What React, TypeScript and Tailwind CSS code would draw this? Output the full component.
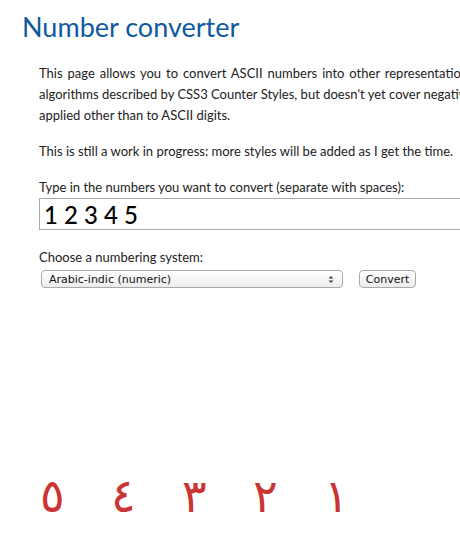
import React from "react";

export default function App() {
  const digits = ["٥", "٤", "٣", "٢", "١"];
  return (
    <div className="w-[460px] h-[552px] overflow-hidden bg-white relative" style={{ fontFamily: "Lato, 'Open Sans', sans-serif" }}>
      <div className="w-[700px]">
        <h1 className="pl-[22px] pt-[12px] text-[27px] leading-[30px] text-[#0f5a9e]">Number converter</h1>
        <div className="pl-[39px] pt-[21px] text-[13px] leading-[21px] text-[#222] whitespace-nowrap">
          <p>
            <span className="[word-spacing:1.6px]">This page allows you to convert ASCII numbers into other representations. It uses the</span>
            <br />
            <span>algorithms described by CSS3 Counter Styles, but doesn't yet cover negative numbers or</span>
            <br />
            applied other than to ASCII digits.
          </p>
          <p className="mt-[15px]">This is still a work in progress: more styles will be added as I get the time.</p>
          <p className="mt-[15px]">Type in the numbers you want to convert (separate with spaces):</p>
          <div className="h-[32px] w-[500px] border border-[#aaa] flex items-center pl-[4px] text-[24px] font-medium text-black">
            1 2 3 4 5
          </div>
          <p className="mt-[17px]">Choose a numbering system:</p>
          <div className="mt-[2px] flex items-center" style={{ fontFamily: "'DejaVu Sans', sans-serif" }}>
            <div className="ml-[2px] h-[18px] w-[302px] border border-[#a9a9a9] rounded-[4px] bg-gradient-to-b from-white to-[#ececec] flex items-center justify-between pl-[7px] pr-[8px] text-[11px] text-[#111]">
              <span>Arabic-indic (numeric)</span>
              <svg width="6" height="9" viewBox="0 0 6 9">
                <path d="M0.5 3.5 L3 1 L5.5 3.5 Z" fill="#444" />
                <path d="M0.5 5.5 L3 8 L5.5 5.5 Z" fill="#444" />
              </svg>
            </div>
            <div className="ml-[16px] h-[18px] w-[57px] border border-[#a9a9a9] rounded-[4px] bg-gradient-to-b from-white to-[#ececec] flex items-center justify-center text-[11px] text-[#111]">
              Convert
            </div>
          </div>
        </div>
        <div className="mt-[183px] ml-[40px] flex text-[#cc3333] text-[46px] leading-[50px]" style={{ fontFamily: "'DejaVu Sans', sans-serif" }}>
          {digits.map((d, i) => (
            <span key={i} className="w-[71px]">{d}</span>
          ))}
        </div>
      </div>
    </div>
  );
}
